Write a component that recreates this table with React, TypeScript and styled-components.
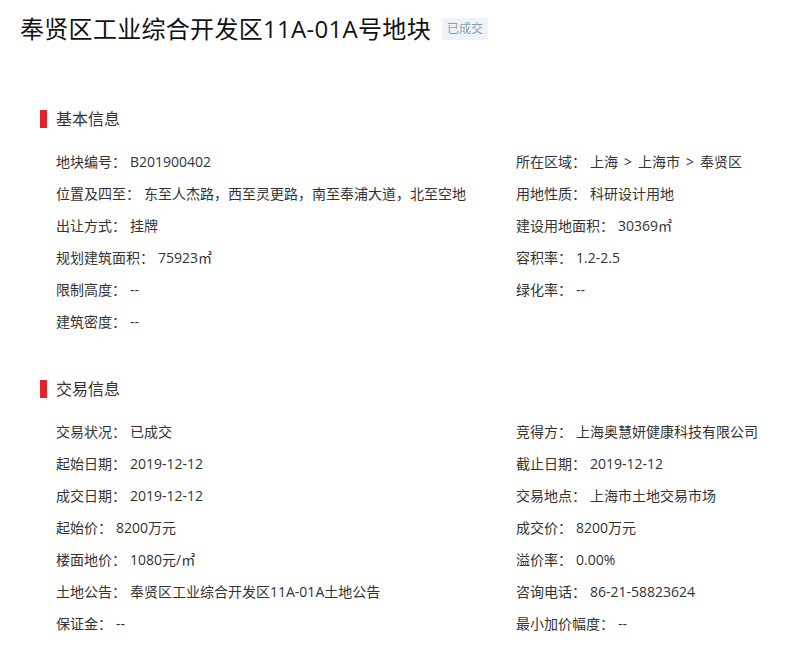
import React from "react";
import styled, { createGlobalStyle } from "styled-components";

const GlobalStyle = createGlobalStyle`
  html, body {
    margin: 0;
    padding: 0;
    background: #ffffff;
  }
  body {
    font-family: "Open Sans", "Noto Sans CJK SC", "Liberation Sans", sans-serif;
    color: #333333;
  }
`;

const Page = styled.div`
  width: 797px;
  min-height: 662px;
  box-sizing: border-box;
  padding: 11px 20px 0 20px;
  background: #ffffff;
`;

const TitleBar = styled.div`
  display: flex;
  align-items: center;
  height: 36px;
  gap: 11px;
`;

const Title = styled.h1`
  margin: 0;
  font-size: 24px;
  line-height: 36px;
  font-weight: 400;
  letter-spacing: 0.3px;
  color: #111111;
  white-space: nowrap;
`;

const Tag = styled.span`
  display: inline-flex;
  align-items: center;
  justify-content: center;
  height: 22px;
  padding: 0 5px;
  border-radius: 2px;
  background: #edf3f8;
  color: #8d9db1;
  font-size: 12px;
  line-height: 22px;
`;

const Section = styled.section<{ $first?: boolean }>`
  margin-top: ${(p) => (p.$first ? "63px" : "42px")};
  padding-left: 20px;
`;

const SectionHeader = styled.div`
  display: flex;
  align-items: center;
  height: 18px;
  gap: 9px;
  margin-bottom: 18px;
`;

const Marker = styled.span`
  width: 7px;
  height: 18px;
  background: #e0262d;
`;

const SectionTitle = styled.h2`
  margin: 0;
  font-size: 16px;
  line-height: 18px;
  font-weight: 400;
  color: #333333;
`;

const Grid = styled.div`
  display: grid;
  grid-template-columns: 460px 1fr;
  grid-auto-rows: 32px;
  padding-left: 16px;
`;

const Item = styled.div`
  display: flex;
  align-items: center;
  font-size: 14px;
  line-height: 32px;
  color: #333333;
  white-space: nowrap;
`;

const Label = styled.span`
  color: #333333;
`;

const Value = styled.span`
  margin-left: 4px;
  color: #333333;
`;

const Sep = styled.span`
  padding: 0 6px;
`;

type Field = [string, React.ReactNode] | null;

const region = (
  <>
    上海<Sep>&gt;</Sep>上海市<Sep>&gt;</Sep>奉贤区
  </>
);

const basic: Field[] = [
  ["地块编号", "B201900402"],
  ["所在区域", region],
  ["位置及四至", "东至人杰路，西至灵更路，南至奉浦大道，北至空地"],
  ["用地性质", "科研设计用地"],
  ["出让方式", "挂牌"],
  ["建设用地面积", "30369㎡"],
  ["规划建筑面积", "75923㎡"],
  ["容积率", "1.2-2.5"],
  ["限制高度", "--"],
  ["绿化率", "--"],
  ["建筑密度", "--"],
  null,
];

const trade: Field[] = [
  ["交易状况", "已成交"],
  ["竞得方", "上海奥慧妍健康科技有限公司"],
  ["起始日期", "2019-12-12"],
  ["截止日期", "2019-12-12"],
  ["成交日期", "2019-12-12"],
  ["交易地点", "上海市土地交易市场"],
  ["起始价", "8200万元"],
  ["成交价", "8200万元"],
  ["楼面地价", "1080元/㎡"],
  ["溢价率", "0.00%"],
  ["土地公告", "奉贤区工业综合开发区11A-01A土地公告"],
  ["咨询电话", "86-21-58823624"],
  ["保证金", "--"],
  ["最小加价幅度", "--"],
];

const FieldGrid: React.FC<{ fields: Field[] }> = ({ fields }) => (
  <Grid>
    {fields.map((f, i) =>
      f ? (
        <Item key={i}>
          <Label>{f[0]}：</Label>
          <Value>{f[1]}</Value>
        </Item>
      ) : (
        <Item key={i} />
      )
    )}
  </Grid>
);

export default function App() {
  return (
    <Page>
      <GlobalStyle />
      <TitleBar>
        <Title>奉贤区工业综合开发区11A-01A号地块</Title>
        <Tag>已成交</Tag>
      </TitleBar>
      <Section $first>
        <SectionHeader>
          <Marker />
          <SectionTitle>基本信息</SectionTitle>
        </SectionHeader>
        <FieldGrid fields={basic} />
      </Section>
      <Section>
        <SectionHeader>
          <Marker />
          <SectionTitle>交易信息</SectionTitle>
        </SectionHeader>
        <FieldGrid fields={trade} />
      </Section>
    </Page>
  );
}
